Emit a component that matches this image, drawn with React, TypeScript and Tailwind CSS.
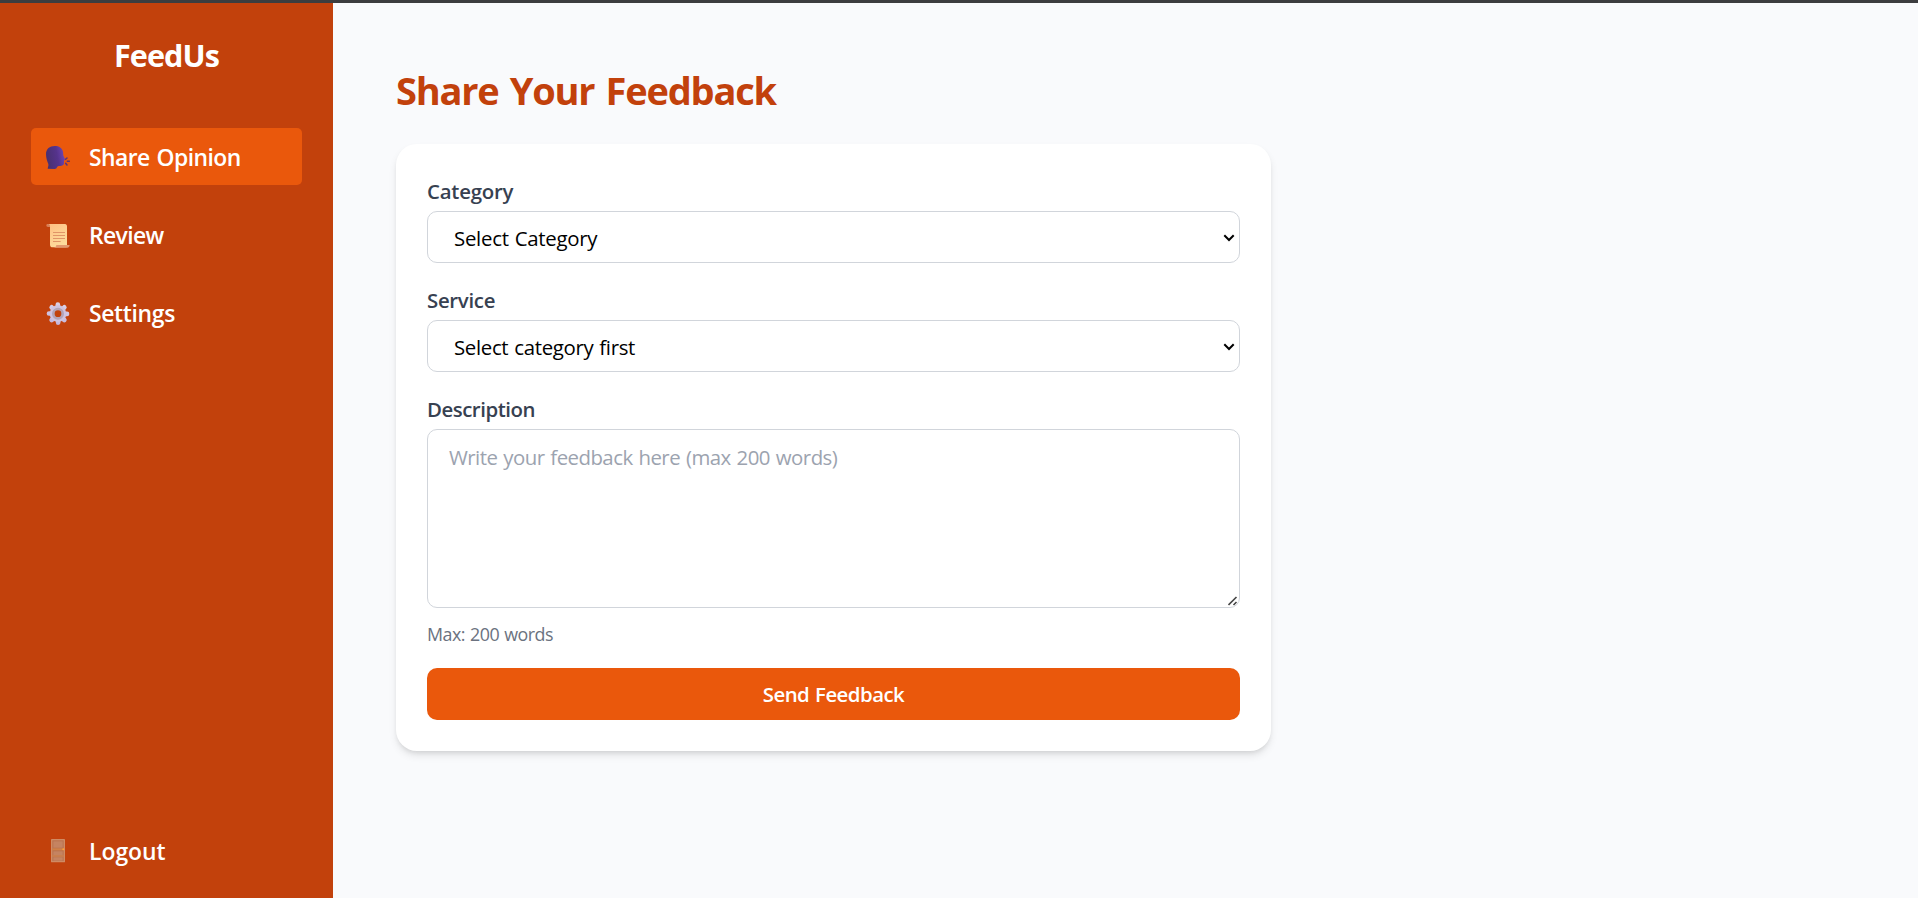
import type { ReactNode } from 'react';

function SpeakingHeadIcon() {
  return (
    <svg viewBox="0 0 78 78" className="size-[26px] shrink-0" fill="none">
      <defs>
        <linearGradient id="head" x1="4" y1="40" x2="58" y2="30" gradientUnits="userSpaceOnUse">
          <stop stopColor="#49306f" />
          <stop offset=".6" stopColor="#55338c" />
          <stop offset="1" stopColor="#6f45b0" />
        </linearGradient>
      </defs>
      <path
        d="M8 74c1-6 3-9 2-14C7 53 3 43 3 31 3 14 14 6 29 6c14 0 22 6 25 17 1 5 0 9 2 14l4 8c1 3-3 4-3 6v7c0 6-5 8-12 8-5 0-8 1-9 4-1 4-3 5-7 5z"
        fill="url(#head)"
      />
      <path d="M62 46l4-4M67 52h6M62 58l4 5" stroke="#5a3478" strokeWidth="4.500" strokeLinecap="round" />
    </svg>
  );
}

function ScrollIcon() {
  return (
    <svg viewBox="0 0 78 78" className="size-[26px] shrink-0" fill="none">
      <defs>
        <linearGradient id="paper" x1="18" y1="8" x2="64" y2="74" gradientUnits="userSpaceOnUse">
          <stop stopColor="#ffc284" />
          <stop offset="1" stopColor="#fde0a0" />
        </linearGradient>
      </defs>
      <path d="M4 10c0-3 2-4 5-4h14v9H9c-3 0-5-2-5-5z" fill="#d98058" />
      <path d="M12 6h48c4 0 6 3 6 7v59c0 2-2 4-4 4H23c-5 0-8-3-8-8V14c0-4-1-6-3-8z" fill="url(#paper)" />
      <path d="M24 31.500h36M24 40.500h36M24 49.500h36M24 58.500h23" stroke="#e09468" strokeWidth="3" />
      <path d="M34 69h40c0 5-3 8-7 8H24c6 0 10-3 10-8z" fill="#e39a70" />
    </svg>
  );
}

function GearIcon() {
  return (
    <svg viewBox="0 0 78 78" className="size-[26px] shrink-0" fill="none">
      <defs>
        <linearGradient id="gear" x1="50" y1="6" x2="30" y2="76" gradientUnits="userSpaceOnUse">
          <stop stopColor="#dcd2e6" />
          <stop offset="1" stopColor="#c3b5dc" />
        </linearGradient>
      </defs>
      <g stroke="url(#gear)" strokeWidth="14" strokeLinecap="round">
        <path d="M38.5 14L39.5 68M12 40.500L66 41.500M20 22L58 60M58 22L20 60" />
      </g>
      <circle cx="39" cy="41" r="19" fill="#c2410c" stroke="#cfc3df" strokeWidth="12" />
      <circle cx="39" cy="41" r="14" stroke="#b3a3b6" strokeWidth="8" />
    </svg>
  );
}

function DoorIcon() {
  return (
    <svg viewBox="0 0 78 78" className="mb-0.5 size-[26px] shrink-0" fill="none">
      <rect x="18" y="6" width="42" height="70" rx="2" fill="#cf8b64" />
      <rect x="22" y="10" width="34" height="62" fill="#b9714e" />
      <rect x="25" y="13" width="28" height="19" fill="#c58361" />
      <rect x="22" y="34" width="34" height="6" fill="#cf8148" />
      <rect x="25" y="43" width="28" height="12" fill="#c58361" />
      <rect x="22" y="55" width="34" height="4" fill="#cf8350" />
      <rect x="25" y="61" width="28" height="10" fill="#c58361" />
      <circle cx="55" cy="37" r="3" fill="#ffa038" />
    </svg>
  );
}

function NavItem({ icon, label, active, tracking }: { icon: ReactNode; label: string; active?: boolean; tracking: string }) {
  return (
    <button
      type="button"
      className={`flex h-[57px] w-full items-center gap-[18px] rounded-[5px] px-3.5 text-left text-[22.9px] leading-none font-semibold ${
        active ? 'bg-[#ea580c]' : ''
      }`}
    >
      {icon}
      <span className={`pt-[3px] ${tracking}`}>{label}</span>
    </button>
  );
}

function SelectField({ label, placeholder, labelTracking, tracking }: { label: string; placeholder: string; labelTracking: string; tracking: string }) {
  return (
    <label className="block h-[109px]">
      <span className={`block h-9 pt-px text-[20.4px] leading-[30px] font-semibold text-[#374151] ${labelTracking}`}>{label}</span>
      <span className="relative block">
        <select
          className={`h-[52px] w-full appearance-none rounded-[10px] border border-[#d1d5db] bg-white pt-0.5 pl-[26px] text-[20.4px] text-black ${tracking}`}
        >
          <option>{placeholder}</option>
        </select>
        <svg viewBox="0 0 12 8" className="pointer-events-none absolute top-[23px] right-[5px] h-2 w-3" fill="none">
          <path d="M1.300 1.300L6 6l4.700-4.700" stroke="#000" strokeWidth="2" />
        </svg>
      </span>
    </label>
  );
}

export default function App() {
  return (
    <div className="flex h-[898px] flex-col overflow-hidden bg-[#f9fafc] font-['Open_Sans',sans-serif]">
      <div className="h-[3px] shrink-0 bg-[#3c3d3f]" />
      <div className="flex min-h-0 flex-1">
        <aside className="flex w-[333px] shrink-0 flex-col bg-[#c2410c] px-[31px] pt-[31px] pb-[19px] text-white">
          <h2 className="text-center text-[30.6px] leading-[42px] font-bold tracking-[-0.93px]">FeedUs</h2>
          <nav className="mt-[52px] flex flex-1 flex-col gap-[21.4px]">
            <NavItem icon={<SpeakingHeadIcon />} label="Share Opinion" active tracking="tracking-[-0.57px] [word-spacing:1.5px]" />
            <NavItem icon={<ScrollIcon />} label="Review" tracking="tracking-[-0.6px]" />
            <NavItem icon={<GearIcon />} label="Settings" tracking="tracking-[-0.33px]" />
          </nav>
          <NavItem icon={<DoorIcon />} label="Logout" tracking="tracking-[0px]" />
        </aside>

        <main className="flex-1 px-[63px] pt-16">
          <h1 className="text-[38px] leading-[47px] font-bold tracking-[-1.2px] text-[#c2410c] [word-spacing:2.5px]">Share Your Feedback</h1>
          <form className="mt-[30px] h-[607px] w-[875px] rounded-[21px] bg-white px-[31px] pt-[31px] shadow-[0_5px_8px_-1px_rgba(0,0,0,0.1),0_3px_5px_-2px_rgba(0,0,0,0.1)]">
            <SelectField label="Category" placeholder="Select Category" labelTracking="tracking-[-0.22px]" tracking="tracking-[-0.27px] [word-spacing:1px]" />
            <SelectField label="Service" placeholder="Select category first" labelTracking="tracking-[-0.3px]" tracking="tracking-[-0.33px] [word-spacing:1px]" />
            <label className="block">
              <span className="block h-9 pt-px text-[20.4px] leading-[30px] font-semibold tracking-[-0.47px] text-[#374151]">Description</span>
              <span className="relative block">
                <textarea
                  placeholder="Write your feedback here (max 200 words)"
                  className="block h-[179px] w-full resize-none rounded-[10px] border border-[#d1d5db] px-[21px] py-3 text-[20.4px] leading-[31px] tracking-[-0.53px] [word-spacing:1.1px] placeholder:text-[#9ca3af]"
                />
                <svg viewBox="0 0 10 10" className="pointer-events-none absolute right-0.5 bottom-0.5 size-2.5" fill="none">
                  <path d="M.5 9L8.500 1M5.500 9L8.500 6" stroke="#444" strokeWidth="1.600" />
                </svg>
              </span>
            </label>
            <p className="mt-[13px] text-[17.85px] leading-[26px] tracking-[-0.52px] text-[#6b7280] [word-spacing:1px]">Max: 200 words</p>
            <button type="button" className="mt-[21px] block h-[52px] w-full rounded-[10px] bg-[#ea580c] text-[20.4px] leading-none font-semibold tracking-[-0.53px] text-white [word-spacing:1px]">
              Send Feedback
            </button>
          </form>
        </main>
      </div>
    </div>
  );
}
